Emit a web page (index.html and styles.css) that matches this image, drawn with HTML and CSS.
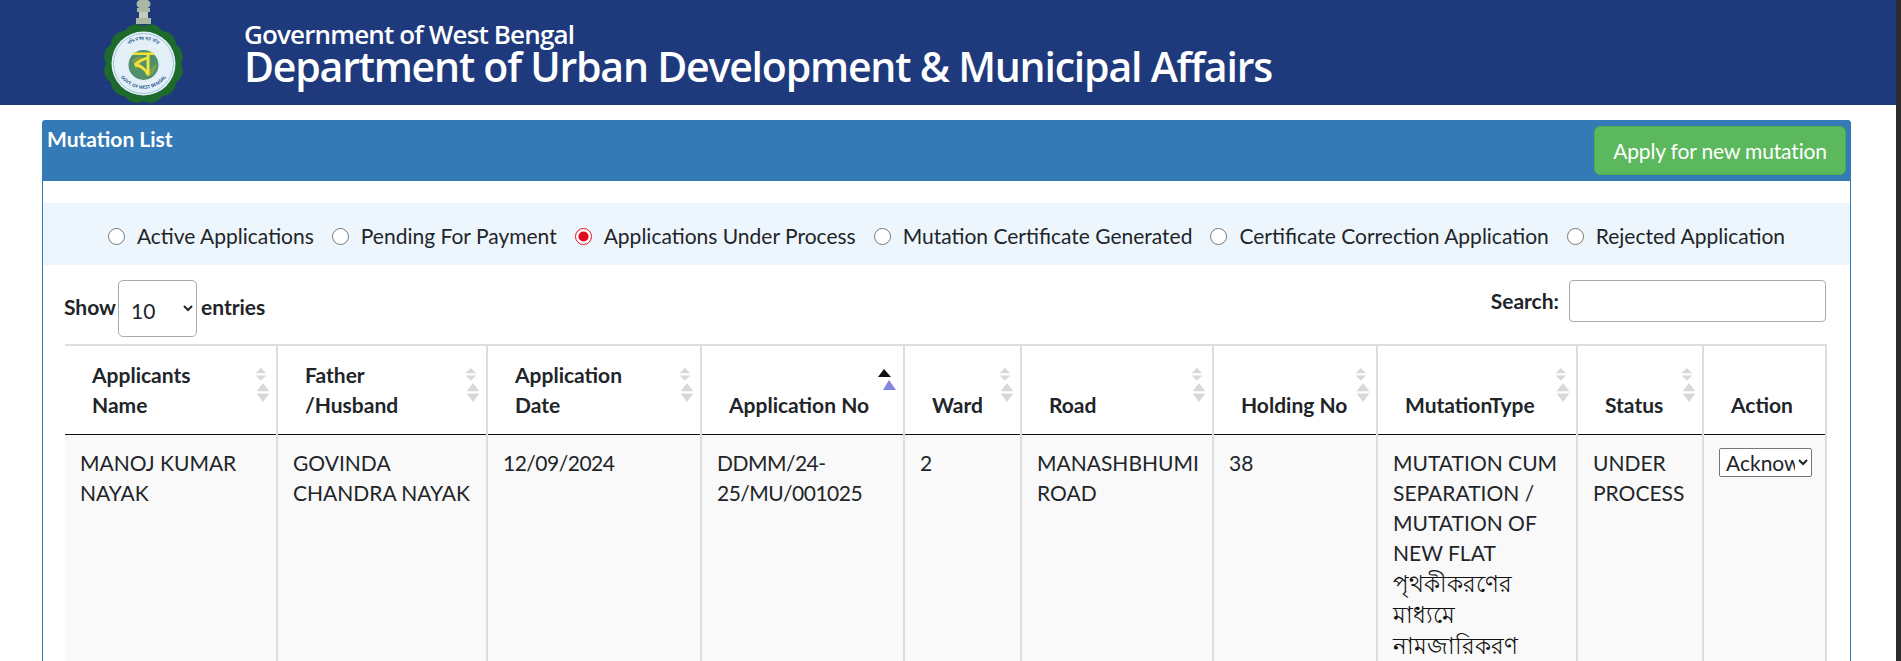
FILE: index.html
```html
<!DOCTYPE html>
<html lang="en">
<head>
    <meta charset="UTF-8">
    <title>Mutation List</title>
    <link rel="stylesheet" href="styles.css">
</head>

<body>
    <svg class="sprites" width="0" height="0">
        <defs>
            <symbol id="sort-idle" viewBox="0 0 16 34">
                <path d="M6 1 L1 6 H11 Z M1 8 H11 L6 13 Z" fill="#d8d8d8"/>
                <path d="M8 15 L2 23 H14 Z M2 25 H14 L8 33 Z" fill="#d8d8d8"/>
            </symbol>
            <symbol id="sort-up" viewBox="0 0 18 22">
                <path d="M6 1 L0 9 H13 Z" fill="#111"/>
                <path d="M11 12 L5 22 H18 Z" fill="#8585e0"/>
            </symbol>
        </defs>
    </svg>

    <div class="page">
        <div class="topbar">
            <svg class="emblem" width="90" height="105" viewBox="0 0 90 105">
                <g fill="#a9b8a4">
                    <ellipse cx="43.5" cy="4" rx="7" ry="5"/>
                    <rect x="37" y="8" width="13" height="4"/>
                    <rect x="39" y="12" width="9" height="6" fill="#c4cdbc"/>
                    <rect x="36" y="18" width="15" height="6"/>
                </g>
                <g fill="#1d6a2c">
                    <rect x="11" y="31" width="65" height="65" rx="14"/>
                    <rect x="11" y="31" width="65" height="65" rx="14" transform="rotate(30 43.5 63.5)"/>
                    <rect x="11" y="31" width="65" height="65" rx="14" transform="rotate(60 43.5 63.5)"/>
                </g>
                <circle cx="43.5" cy="63.5" r="32" fill="#e3f0f8"/>
                <circle cx="43.5" cy="63.5" r="30" fill="none" stroke="#9fc4dd" stroke-width="1"/>
                <circle cx="43.5" cy="65" r="15" fill="#4f8f6a"/>
                <path d="M32 60 Q38 54 44 58 Q40 66 36 70 Z M48 70 Q54 68 56 62 Q58 70 50 76 Z" fill="#7f9d4f"/>
                <path id="arc-top" d="M20 63 A23.5 23.5 0 0 1 67 63" fill="none"/>
                <path id="arc-bottom" d="M16 66 A28 28 0 0 0 71 66" fill="none"/>
                <text class="emblem-ring"><textPath href="#arc-top" startOffset="50%" text-anchor="middle">পশ্চিমবঙ্গ সরকার</textPath></text>
                <text class="emblem-ring"><textPath href="#arc-bottom" startOffset="50%" text-anchor="middle">GOVT. OF WEST BENGAL</textPath></text>
                <text class="emblem-letter" x="43.5" y="75" text-anchor="middle">ব</text>
            </svg>
            <div class="topbar-text">
                <div class="gov-name">Government of West Bengal</div>
                <div class="dept-name">Department of Urban Development &amp; Municipal Affairs</div>
            </div>
        </div>

        <div class="panel">
            <div class="panel-heading">
                <div class="panel-title">Mutation List</div>
                <a class="btn-apply">Apply for new mutation</a>
            </div>

            <div class="status-band">
                <label class="status-option"><input type="radio" name="status"> Active Applications</label>
                <label class="status-option"><input type="radio" name="status"> Pending For Payment</label>
                <label class="status-option"><input type="radio" name="status" checked> Applications Under Process</label>
                <label class="status-option"><input type="radio" name="status"> Mutation Certificate Generated</label>
                <label class="status-option"><input type="radio" name="status"> Certificate Correction Application</label>
                <label class="status-option"><input type="radio" name="status"> Rejected Application</label>
            </div>

            <div class="table-tools">
                <label class="entries">Show
                    <select class="entries-select">
                        <option>10</option>
                        <option>25</option>
                        <option>50</option>
                    </select>
                    entries</label>
                <label class="search">Search: <input type="text" class="search-input"></label>
            </div>

            <table class="mutation-table">
                <thead>
                    <tr>
                        <th class="col-name">Applicants<br>Name<svg class="sort"><use href="#sort-idle"/></svg></th>
                        <th class="col-father">Father<br>/Husband<svg class="sort"><use href="#sort-idle"/></svg></th>
                        <th class="col-date">Application<br>Date<svg class="sort"><use href="#sort-idle"/></svg></th>
                        <th class="col-appno">Application No<svg class="sort-active"><use href="#sort-up"/></svg></th>
                        <th class="col-ward">Ward<svg class="sort"><use href="#sort-idle"/></svg></th>
                        <th class="col-road">Road<svg class="sort"><use href="#sort-idle"/></svg></th>
                        <th class="col-holding">Holding No<svg class="sort"><use href="#sort-idle"/></svg></th>
                        <th class="col-type">MutationType<svg class="sort"><use href="#sort-idle"/></svg></th>
                        <th class="col-status">Status<svg class="sort"><use href="#sort-idle"/></svg></th>
                        <th class="col-action">Action</th>
                    </tr>
                </thead>
                <tbody>
                    <tr>
                        <td>MANOJ KUMAR NAYAK</td>
                        <td>GOVINDA CHANDRA NAYAK</td>
                        <td class="tight">12/09/2024</td>
                        <td class="tight">DDMM/24-25/MU/001025</td>
                        <td>2</td>
                        <td>MANASHBHUMI ROAD</td>
                        <td>38</td>
                        <td>MUTATION CUM SEPARATION / MUTATION OF NEW FLAT <span class="bn">পৃথকীকরণের মাধ্যমে নামজারিকরণ</span></td>
                        <td>UNDER PROCESS</td>
                        <td>
                            <select class="action-select">
                                <option>Acknowledgement</option>
                                <option>View</option>
                            </select>
                        </td>
                    </tr>
                </tbody>
            </table>
        </div>
    </div>
    <div class="window-edge"></div>
</body>
</html>
```

FILE: styles.css
```css
html, body {
    height: 100%;
    overflow: hidden;
}
body {
    margin: 0;
    display: flex;
    background: #fff;
    font-family: Lato, "Noto Sans", sans-serif;
    font-size: 21px;
    line-height: 30px;
    color: #212529;
}
.sprites {
    position: absolute;
}
.page {
    flex: 1;
    min-width: 0;
}
.window-edge {
    width: 5px;
    background: #2b2b2b;
}

/* top banner */
.topbar {
    height: 105px;
    background: #1e3a7c;
    display: flex;
    align-items: flex-start;
    padding-left: 100px;
    overflow: hidden;
}
.emblem {
    flex: none;
    filter: blur(0.4px);
}
.emblem-ring {
    font-family: "Noto Sans", sans-serif;
    font-size: 4.5px;
    font-weight: 700;
    fill: #2d5a8c;
}
.emblem-letter {
    font-family: "Noto Sans", sans-serif;
    font-size: 34px;
    font-weight: 700;
    fill: #f2e53a;
}
.topbar-text {
    margin-left: 54px;
    padding-top: 20px;
    color: #fff;
    font-family: "Open Sans", sans-serif;
    font-weight: 600;
}
.gov-name {
    font-size: 26px;
    line-height: 28px;
    letter-spacing: -0.85px;
}
.dept-name {
    font-size: 41px;
    line-height: 36px;
    letter-spacing: -1.2px;
}

/* panel */
.panel {
    margin: 15px 45px 0 42px;
    border: 1px solid #337ab7;
    border-bottom: 0;
    border-radius: 4px 4px 0 0;
}
.panel-heading {
    box-sizing: border-box;
    height: 61px;
    margin: -1px -1px 0;
    background: #337ab7;
    border-radius: 4px 4px 0 0;
    display: flex;
    justify-content: space-between;
    align-items: flex-start;
    padding: 6px 5px 0 5px;
}
.panel-title {
    color: #fff;
    font-weight: 700;
    line-height: 26px;
}
.btn-apply {
    width: 252px;
    height: 49px;
    box-sizing: border-box;
    background: #5cb85c;
    border: 1px solid #4cae4c;
    border-radius: 6px;
    color: #fff;
    line-height: 47px;
    text-align: center;
    letter-spacing: -0.15px;
}

/* status radios */
.status-band {
    box-sizing: border-box;
    margin-top: 22px;
    height: 62px;
    padding-top: 4px;
    background: #eef6fd;
    display: flex;
    justify-content: center;
    align-items: center;
    gap: 18px;
}
.status-option {
    display: flex;
    align-items: center;
    gap: 12px;
}
.status-option input {
    width: 17px;
    height: 17px;
    margin: 0;
    accent-color: #e00b1c;
}

/* show entries / search */
.table-tools {
    margin: 15px 24px 0 21px;
    height: 57px;
    display: flex;
    justify-content: space-between;
    align-items: flex-start;
    font-weight: 700;
}
.entries {
    box-sizing: border-box;
    height: 57px;
    padding-bottom: 4px;
    display: flex;
    align-items: center;
    gap: 2px;
}
.entries-select {
    width: 79px;
    height: 57px;
    margin: 0 2px -4px 0;
    padding: 3px 8px 0;
    background: #fff;
    border: 1px solid #aaa;
    border-radius: 5px;
    font: 400 21px Lato, sans-serif;
    color: #212529;
}
.search {
    display: flex;
    align-items: center;
    gap: 10px;
}
.search-input {
    width: 257px;
    height: 42px;
    box-sizing: border-box;
    border: 1px solid #aaa;
    border-radius: 4px;
}

/* table */
.mutation-table {
    margin: 7px 24px 0 22px;
    width: 1761px;
    table-layout: fixed;
    border-collapse: collapse;
    border-top: 2px solid #ddd;
}
.col-name { width: 212px; }
.col-father { width: 210px; }
.col-date { width: 214px; }
.col-appno { width: 203px; }
.col-ward { width: 117px; }
.col-road { width: 192px; }
.col-holding { width: 164px; }
.col-type { width: 200px; }
.col-status { width: 126px; }
.col-action { width: 123px; }

.mutation-table th {
    box-sizing: border-box;
    position: relative;
    padding: 14px 8px 14px 27px;
    border-right: 2px solid #ddd;
    border-bottom: 1px solid #111;
    background: #fff;
    text-align: left;
    vertical-align: bottom;
    font-weight: 700;
}
.mutation-table td {
    padding: 13px 15px 12px;
    border-right: 2px solid #ddd;
    background: #f9f9f9;
    vertical-align: top;
    height: 400px;
}
.mutation-table td.tight {
    letter-spacing: -0.5px;
}
.bn {
    font-size: 23px;
    color: #111;
}
.sort {
    position: absolute;
    top: 21px;
    right: 4px;
    width: 18px;
    height: 36px;
}
.sort-active {
    position: absolute;
    top: 22px;
    right: 7px;
    width: 18px;
    height: 22px;
}
.action-select {
    display: block;
    width: 93px;
    height: 29px;
    margin: 0;
    padding: 0 0 0 2px;
    background: #fff;
    border: 1px solid #767676;
    border-radius: 2px;
    font: 400 21px Lato, sans-serif;
    color: #212529;
}
```
